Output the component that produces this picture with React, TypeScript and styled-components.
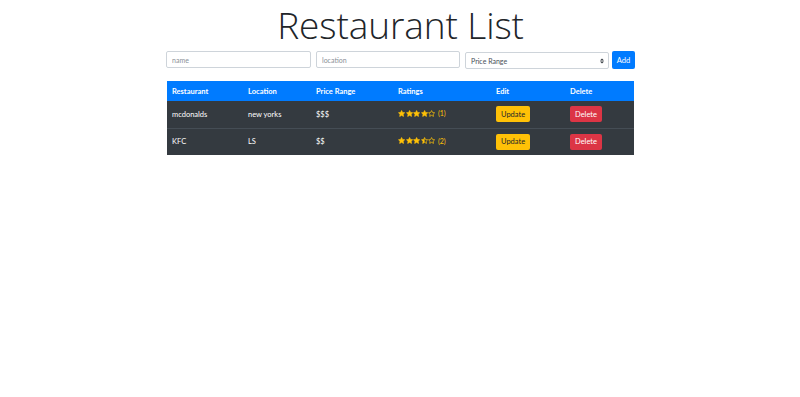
import { createGlobalStyle, styled } from "styled-components";

const GlobalStyle = createGlobalStyle`
  body {
    margin: 0;
    font-family: "Open Sans", "Liberation Sans", sans-serif;
    color: #212529;
    background: #fff;
  }
`;

const Page = styled.div`
  width: 470px;
  margin: 0 auto;
  box-sizing: border-box;
  padding-left: 1px;
`;

const Title = styled.h1`
  margin: 0;
  text-align: center;
  font-size: 37px;
  font-weight: 300;
  line-height: 50px;
  letter-spacing: -0.1px;
`;

const Form = styled.form`
  display: grid;
  grid-template-columns: 145px 144px 144px 23px;
  column-gap: 5px;
  margin-top: 1px;
  align-items: start;
  & > :last-child {
    margin-left: -2px;
  }
`;

const Input = styled.input`
  box-sizing: border-box;
  height: 17px;
  padding: 0 5px;
  border: 1px solid #ced4da;
  border-radius: 2px;
  font-family: "Lato", "Open Sans", sans-serif;
  font-size: 7px;
  color: #495057;
  &::placeholder {
    color: #8a9097;
  }
`;

const Select = styled.div`
  box-sizing: border-box;
  height: 17px;
  margin-top: 1px;
  padding: 0 4px 0 5px;
  border: 1px solid #ced4da;
  border-radius: 2px;
  font-family: "Lato", "Open Sans", sans-serif;
  font-size: 7px;
  color: #495057;
  display: flex;
  align-items: center;
  justify-content: space-between;
`;

const Button = styled.button<{ $bg: string; $fg: string }>`
  box-sizing: border-box;
  height: 16px;
  padding: 0 5px;
  border: none;
  border-radius: 2px;
  background: ${(p) => p.$bg};
  color: ${(p) => p.$fg};
  font-family: "Lato", "Open Sans", sans-serif;
  font-size: 7.5px;
  cursor: pointer;
`;

const AddButton = styled(Button)`
  height: 18px;
  width: 23px;
  padding: 0;
`;

const Table = styled.table`
  margin-top: 12px;
  margin-left: 1px;
  width: 467px;
  table-layout: fixed;
  border-collapse: collapse;
  font-family: "Lato", "Open Sans", sans-serif;
  font-size: 7.5px;
`;

const HeadCell = styled.th<{ $w: number }>`
  box-sizing: border-box;
  width: ${(p) => p.$w}px;
  height: 20px;
  padding: 0 5px;
  background: #007bff;
  color: #fff;
  text-align: left;
  font-weight: 700;
`;

const Row = styled.tr`
  background: #343a40;
  color: #fff;
  & + & td {
    border-top: 1px solid #454d55;
  }
`;

const Cell = styled.td`
  height: 27px;
  padding: 0 5px;
  box-sizing: border-box;
`;

const Stars = styled.span`
  display: inline-flex;
  align-items: center;
  gap: 0.4px;
`;

const Count = styled.span`
  color: #ffc107;
  font-size: 7px;
  margin-left: 2px;
`;

type Fill = "full" | "half" | "empty";

function Star({ fill }: { fill: Fill }) {
  const d =
    "M8 1.2l2.1 4.3 4.7.7-3.4 3.3.8 4.7L8 11.9l-4.2 2.3.8-4.7L1.2 6.2l4.7-.7z";
  return (
    <svg width="7.2" height="7.2" viewBox="0 0 16 16">
      <defs>
        <clipPath id="half">
          <rect x="0" y="0" width="8" height="16" />
        </clipPath>
      </defs>
      {fill === "full" && <path d={d} fill="#ffc107" />}
      {fill === "half" && <path d={d} fill="#ffc107" clipPath="url(#half)" />}
      <path d={d} fill="none" stroke="#ffc107" strokeWidth="1.6" strokeLinejoin="round" />
    </svg>
  );
}

const restaurants = [
  { name: "mcdonalds", location: "new yorks", price: 3, rating: 4, count: 1 },
  { name: "KFC", location: "LS", price: 2, rating: 3.5, count: 2 },
];

function Rating({ value, count }: { value: number; count: number }) {
  const stars = [1, 2, 3, 4, 5].map((i) =>
    value >= i ? "full" : value >= i - 0.5 ? "half" : "empty"
  ) as Fill[];
  return (
    <Stars>
      {stars.map((s, i) => (
        <Star key={i} fill={s} />
      ))}
      <Count>({count})</Count>
    </Stars>
  );
}

export default function App() {
  return (
    <Page>
      <GlobalStyle />
      <Title>Restaurant List</Title>
      <Form onSubmit={(e) => e.preventDefault()}>
        <Input placeholder="name" />
        <Input placeholder="location" />
        <Select>
          <span>Price Range</span>
          <svg width="4" height="6" viewBox="0 0 4 6">
            <path d="M0 2.5L2 0.5 4 2.5z M0 3.5L2 5.5 4 3.5z" fill="#343a40" />
          </svg>
        </Select>
        <AddButton $bg="#007bff" $fg="#fff">
          Add
        </AddButton>
      </Form>
      <Table>
        <thead>
          <tr>
            <HeadCell $w={76}>Restaurant</HeadCell>
            <HeadCell $w={68}>Location</HeadCell>
            <HeadCell $w={82}>Price Range</HeadCell>
            <HeadCell $w={98}>Ratings</HeadCell>
            <HeadCell $w={74}>Edit</HeadCell>
            <HeadCell $w={69}>Delete</HeadCell>
          </tr>
        </thead>
        <tbody>
          {restaurants.map((r) => (
            <Row key={r.name}>
              <Cell>{r.name}</Cell>
              <Cell>{r.location}</Cell>
              <Cell>{"$".repeat(r.price)}</Cell>
              <Cell>
                <Rating value={r.rating} count={r.count} />
              </Cell>
              <Cell>
                <Button $bg="#ffc107" $fg="#212529">
                  Update
                </Button>
              </Cell>
              <Cell>
                <Button $bg="#dc3545" $fg="#fff">
                  Delete
                </Button>
              </Cell>
            </Row>
          ))}
        </tbody>
      </Table>
    </Page>
  );
}
